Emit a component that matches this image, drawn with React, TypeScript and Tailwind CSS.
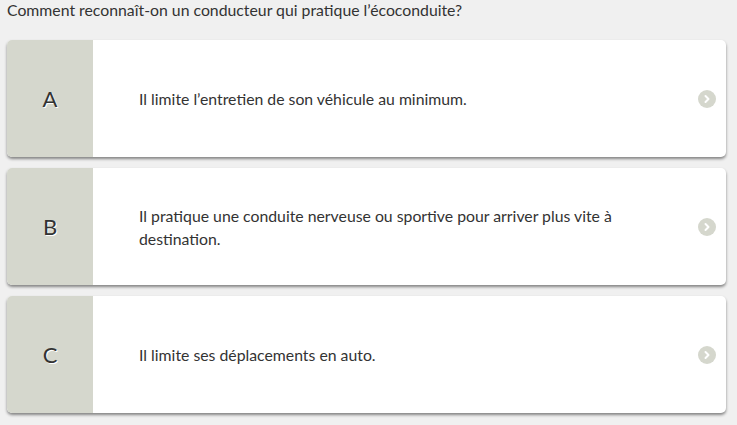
const answers = [
	{ letter: 'A', text: 'Il limite l’entretien de son véhicule au minimum.' },
	{ letter: 'B', text: 'Il pratique une conduite nerveuse ou sportive pour arriver plus vite à destination.' },
	{ letter: 'C', text: 'Il limite ses déplacements en auto.' },
];

function Chevron() {
	return (
		<div className="w-[18px] h-[18px] rounded-full bg-[#d5d7cd] flex items-center justify-center shrink-0">
			<svg width="10" height="10" viewBox="0 0 10 10">
				<path d="M3.5 2 L6.5 5 L3.5 8" stroke="white" strokeWidth="2" fill="none" strokeLinecap="round" strokeLinejoin="round" />
			</svg>
		</div>
	);
}

export default function App() {
	return (
		<div className="w-[737px] h-[425px] bg-[#f0f0f0] font-['Lato',sans-serif] text-[#333333] overflow-hidden">
			<div className="px-[7px] pt-0 text-[15.8px] leading-[20px]">
				Comment reconnaît-on un conducteur qui pratique l’écoconduite?
			</div>
			<div className="flex flex-col gap-[11px] pl-[7px] pr-[11px] mt-[20px]">
				{answers.map((a) => (
					<div
						key={a.letter}
						className="flex h-[117px] bg-white rounded-[5px] overflow-hidden shadow-[0_2px_3px_rgba(0,0,0,0.45)]">
						<div className="w-[86px] bg-[#d5d7cd] flex items-center justify-center text-[22px] text-[#333333] [text-shadow:1px_1px_0_#ffffff]">
							{a.letter}
						</div>
						<div className="flex-1 flex items-center pl-[46px] pr-[80px] text-[15.8px] leading-[23px]">
							{a.text}
						</div>
						<div className="flex items-center pr-[10px]">
							<Chevron />
						</div>
					</div>
				))}
			</div>
		</div>
	);
}
